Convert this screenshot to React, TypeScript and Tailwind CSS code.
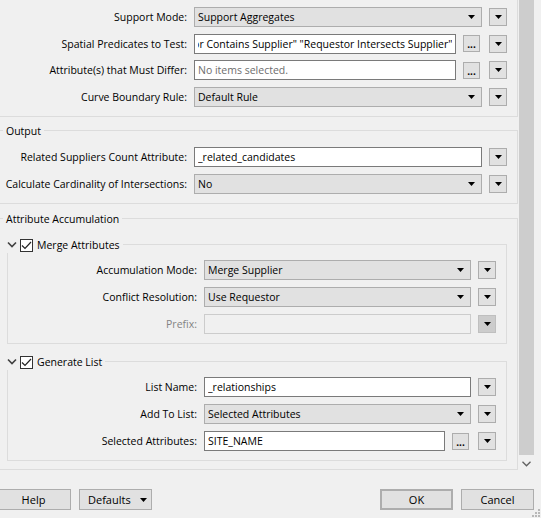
import React, { useEffect, useRef } from 'react';

const FONT = { fontFamily: '"Open Sans", "Noto Sans", sans-serif' };

const Tri = () => (
  <svg width="7" height="4" viewBox="0 0 7 4" className="block">
    <polygon points="0,0 7,0 3.5,4" fill="#000" />
  </svg>
);

const DropBtn = ({ disabled = false }: { disabled?: boolean }) => (
  <div
    className={`w-[18px] h-[18px] shrink-0 flex items-center justify-center border ${
      disabled ? 'bg-[#cccccc] border-[#bfbfbf]' : 'bg-[#e1e1e1] border-[#adadad]'
    }`}
  >
    <Tri />
  </div>
);

const Ellipsis = () => (
  <div className="w-[17px] h-[17px] shrink-0 bg-[#e1e1e1] border border-[#adadad] flex items-end justify-center text-[10px] font-bold leading-[10px] pb-[2px]">
    ...
  </div>
);

const Combo = ({ value }: { value: string }) => (
  <div className="flex-1 h-[20px] bg-[#e1e1e1] border border-[#adadad] flex items-center pl-[3px] pr-[6px]">
    <span className="flex-1 truncate">{value}</span>
    <Tri />
  </div>
);

const TextBox = ({ value, placeholder, alignEnd, disabled }: { value?: string; placeholder?: string; alignEnd?: boolean; disabled?: boolean }) => {
  const ref = useRef<HTMLInputElement>(null);

  // scrolled to the end, like the field in the screenshot
  useEffect(() => {
    if (alignEnd && ref.current) ref.current.scrollLeft = ref.current.scrollWidth;
  }, [alignEnd, value]);

  return (
    <input
      ref={ref}
      readOnly
      disabled={disabled}
      value={value ?? ''}
      placeholder={placeholder}
      className={`flex-1 min-w-0 h-[20px] border px-[3px] outline-none text-black placeholder:text-[#6d6d6d] ${
        disabled ? 'bg-[#f0f0f0] border-[#cccccc]' : 'bg-white border-[#7a7a7a]'
      }`}
    />
  );
};

type RowProps = {
  label: string;
  labelW: number;
  children: React.ReactNode;
  ellipsis?: boolean;
  disabled?: boolean;
};

const Row = ({ label, labelW, children, ellipsis, disabled }: RowProps) => (
  <div className="flex items-center h-[20px]">
    <div className={`shrink-0 text-right whitespace-nowrap ${disabled ? 'text-[#838383]' : ''}`} style={{ width: labelW }}>
      {label}
    </div>
    <div className="flex-1 flex items-center ml-[7px] min-w-0">
      {children}
      {ellipsis && (
        <div className="ml-[7px]">
          <Ellipsis />
        </div>
      )}
    </div>
    <div className={`mr-[10px] ${ellipsis ? 'ml-[9px]' : 'ml-[7px]'}`}>
      <DropBtn disabled={disabled} />
    </div>
  </div>
);

const Legend = ({ children }: { children: React.ReactNode }) => (
  <div className="absolute left-[3px] top-0 -translate-y-1/2 bg-[#f0f0f0] px-[3px] leading-[16px]">{children}</div>
);

const Chevron = () => (
  <svg width="10" height="7" viewBox="0 0 10 7" className="block">
    <path d="M1 1.5 L5 5.5 L9 1.5" fill="none" stroke="#404040" strokeWidth="1.6" />
  </svg>
);

const Check = () => (
  <div className="w-[13px] h-[13px] bg-white border border-[#333333] flex items-center justify-center">
    <svg width="11" height="9" viewBox="0 0 11 9" className="block">
      <path d="M1 4.5 L4 7.5 L10 1" fill="none" stroke="#222" strokeWidth="1.2" />
    </svg>
  </div>
);

const SubBox = ({ title, children }: { title: string; children: React.ReactNode }) => (
  <div className="relative ml-[7px] mr-[10px] border border-[#dcdcdc] pt-[15px] pb-[9px] flex flex-col gap-[7px]">
    <div className="absolute left-[-4px] top-0 -translate-y-1/2 bg-[#f0f0f0] flex items-center pr-[3px] h-[16px]">
      <div className="w-[15px] flex justify-center pb-[2px]">
        <Chevron />
      </div>
      <div className="ml-[1px]">
        <Check />
      </div>
      <span className="ml-[4px]">{title}</span>
    </div>
    {children}
  </div>
);

const Button = ({ children, className = '' }: { children: React.ReactNode; className?: string }) => (
  <div className={`h-[21px] bg-[#e1e1e1] border border-[#adadad] flex items-center justify-center ${className}`}>{children}</div>
);

export default function App() {
  return (
    <div
      className="w-[541px] h-[518px] bg-[#f0f0f0] text-[10.5px] leading-[16px] text-black flex flex-col overflow-hidden relative select-none"
      style={FONT}
    >
      {/* Scroll area */}
      <div className="h-[470px] flex shrink-0">
        <div className="w-[518px] shrink-0 flex flex-col">
          {/* Top group */}
          <div className="border-r border-b border-[#dcdcdc] pt-[7px] pb-[9px] flex flex-col gap-[6.7px]">
            <Row label="Support Mode:" labelW={187}>
              <Combo value="Support Aggregates" />
            </Row>
            <Row label="Spatial Predicates to Test:" labelW={187} ellipsis>
              <TextBox value={'"Requestor Contains Supplier" "Requestor Intersects Supplier"'} alignEnd />
            </Row>
            <Row label="Attribute(s) that Must Differ:" labelW={187} ellipsis>
              <TextBox placeholder="No items selected." />
            </Row>
            <Row label="Curve Boundary Rule:" labelW={187}>
              <Combo value="Default Rule" />
            </Row>
          </div>

          {/* Output */}
          <div className="relative mt-[13px] border-t border-r border-b border-[#dcdcdc] pt-[16px] pb-[9px] flex flex-col gap-[7px]">
            <Legend>Output</Legend>
            <Row label="Related Suppliers Count Attribute:" labelW={187}>
              <TextBox value="_related_candidates" />
            </Row>
            <Row label="Calculate Cardinality of Intersections:" labelW={187}>
              <Combo value="No" />
            </Row>
          </div>

          {/* Attribute Accumulation */}
          <div className="relative mt-[14px] flex-1 border-t border-r border-b border-[#dcdcdc] pt-[25px] pb-[8px] flex flex-col">
            <Legend>Attribute Accumulation</Legend>
            <SubBox title="Merge Attributes">
              <Row label="Accumulation Mode:" labelW={189}>
                <Combo value="Merge Supplier" />
              </Row>
              <Row label="Conflict Resolution:" labelW={189}>
                <Combo value="Use Requestor" />
              </Row>
              <Row label="Prefix:" labelW={189} disabled>
                <TextBox disabled />
              </Row>
            </SubBox>
            <div className="mt-[17px]">
              <SubBox title="Generate List">
                <Row label="List Name:" labelW={189}>
                  <TextBox value="_relationships" />
                </Row>
                <Row label="Add To List:" labelW={189}>
                  <Combo value="Selected Attributes" />
                </Row>
                <Row label="Selected Attributes:" labelW={189} ellipsis>
                  <TextBox value="SITE_NAME" />
                </Row>
              </SubBox>
            </div>
          </div>
        </div>

        {/* Scrollbar */}
        <div className="w-[17px] shrink-0 flex flex-col">
          <div className="h-[455px] ml-[1px] mr-[1px] bg-[#cdcdcd]" />
          <div className="flex-1 flex justify-center pt-[6px]">
            <svg width="9" height="6" viewBox="0 0 9 6" className="block">
              <path d="M0.5 0.8 L4.5 4.8 L8.5 0.8" fill="none" stroke="#606060" strokeWidth="1.3" />
            </svg>
          </div>
        </div>
      </div>

      {/* Footer */}
      <div className="flex-1 flex items-start pt-[19px] text-[11px]">
        <Button className="ml-[-4px] w-[75px]">Help</Button>
        <Button className="ml-[8px] w-[73px] justify-start pl-[8px]">
          <span>Defaults</span>
          <span className="ml-[9px]">
            <Tri />
          </span>
        </Button>
        <div className="flex-1" />
        <Button className="w-[73px] border-2 border-[#0078d7]">OK</Button>
        <Button className="ml-[8px] mr-[7px] w-[73px]">Cancel</Button>
      </div>

      {/* Resize grip */}
      <svg width="8" height="8" viewBox="0 0 8 8" className="absolute right-[1px] bottom-[1px]">
        <rect x="6" y="0" width="2" height="2" fill="#b8b8b8" />
        <rect x="3" y="3" width="2" height="2" fill="#b8b8b8" />
        <rect x="6" y="3" width="2" height="2" fill="#b8b8b8" />
        <rect x="0" y="6" width="2" height="2" fill="#b8b8b8" />
        <rect x="3" y="6" width="2" height="2" fill="#b8b8b8" />
        <rect x="6" y="6" width="2" height="2" fill="#b8b8b8" />
      </svg>
    </div>
  );
}
